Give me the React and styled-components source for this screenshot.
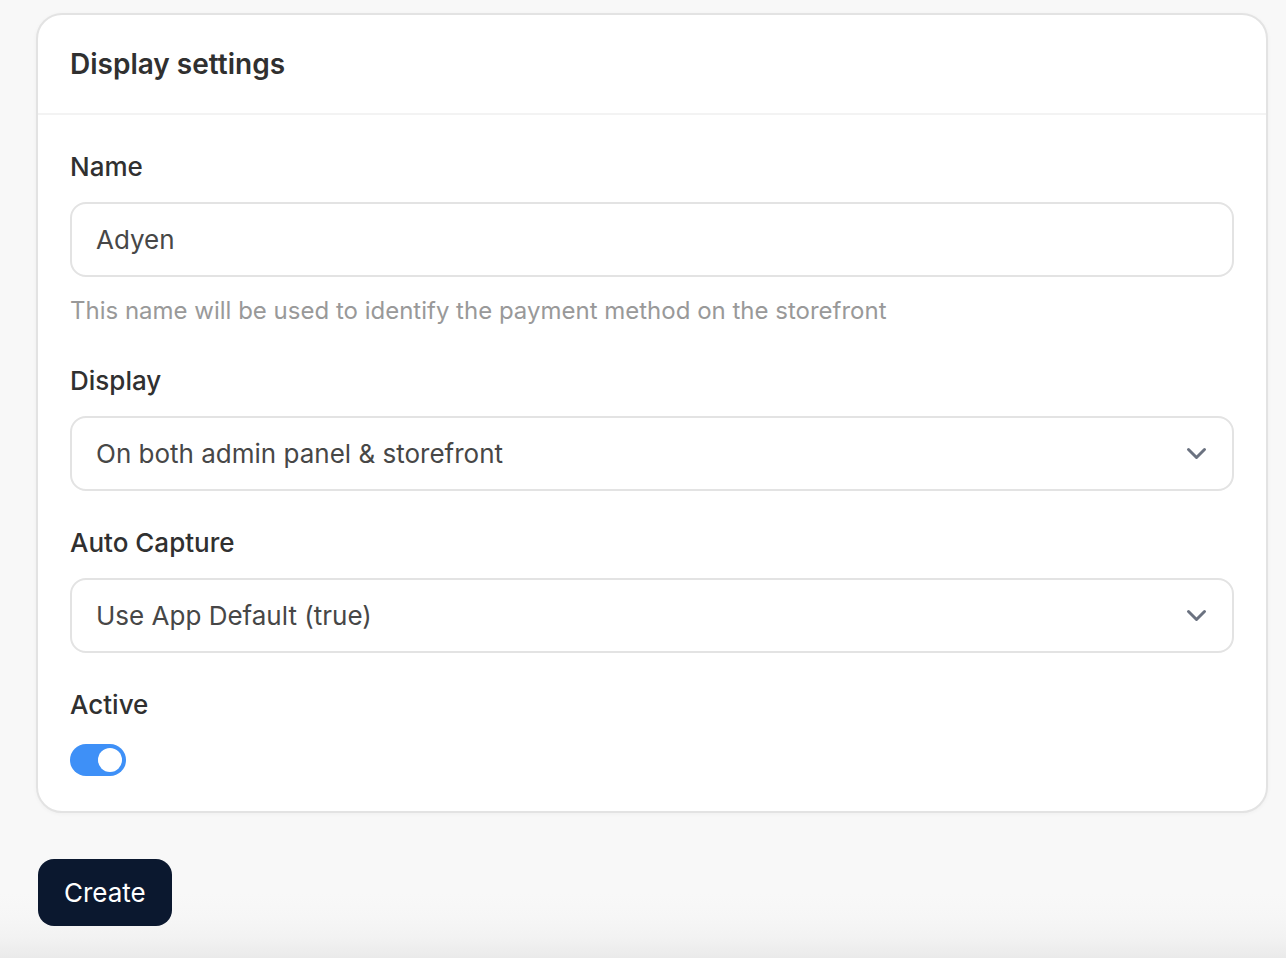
import React from "react";
import styled, { createGlobalStyle } from "styled-components";

const GlobalStyle = createGlobalStyle`
  *, *::before, *::after { box-sizing: border-box; }
  body {
    margin: 0;
    background: #f8f8f8;
    color: #303030;
    font-family: Inter, "Liberation Sans", sans-serif;
    -webkit-font-smoothing: antialiased;
  }
`;

const Page = styled.form`
  min-height: 100vh;
  padding: 13px 18px 32px 36px;
  background: linear-gradient(to top, #eaeaea 0, #f2f2f2 20px, #f6f6f6 40px, #f8f8f8 64px);
`;

const Card = styled.section`
  background: #fff;
  border: 2px solid #e3e3e3;
  border-radius: 26px;
  box-shadow: 0 1px 4px rgba(0, 0, 0, 0.04);
`;

const CardHeader = styled.header`
  padding: 32px;
  border-bottom: 2px solid #f3f3f3;
`;

const Title = styled.h2`
  margin: 0;
  font-size: 28px;
  font-weight: 600;
  line-height: 34px;
`;

const Fields = styled.div`
  display: flex;
  flex-direction: column;
  gap: 32px;
  padding: 32px;
`;

const Field = styled.div`
  display: flex;
  flex-direction: column;
  align-items: flex-start;
`;

const Label = styled.label`
  margin-bottom: 15px;
  font-size: 26px;
  font-weight: 500;
  line-height: 40px;
`;

const control = `
  display: block;
  width: 100%;
  height: 75px;
  margin: 0;
  padding: 0 24px;
  color: #474747;
  background: #fff;
  border: 2px solid #e3e3e3;
  border-radius: 16px;
  font: 400 26px/40px Inter, "Liberation Sans", sans-serif;
`;

const TextInput = styled.input`${control}`;

const Select = styled.select`
  ${control}
  appearance: none;
`;

const SelectBox = styled.div`
  position: relative;
  width: 100%;
`;

const Chevron = styled.svg`
  position: absolute;
  top: 24px;
  right: 24px;
  pointer-events: none;
`;

const Hint = styled.p`
  margin: 16px 0 0;
  color: #999;
  font-size: 24px;
  line-height: 36px;
`;

const Switch = styled.input`
  appearance: none;
  width: 56px;
  height: 32px;
  margin: 4px 0 3px;
  padding: 4px;
  border-radius: 16px;
  background: #ccc;

  &::before {
    content: "";
    display: block;
    width: 24px;
    height: 24px;
    border-radius: 50%;
    background: #fff;
  }
  &:checked { background: #3e90f7; }
  &:checked::before { margin-left: 24px; }
`;

const Button = styled.button`
  display: block;
  height: 67px;
  margin: 46px 0 0 2px;
  padding: 0 26px;
  border: 0;
  border-radius: 16px;
  background: #0b182f;
  color: #fff;
  font: 400 26px/40px Inter, "Liberation Sans", sans-serif;
`;

function SelectField({ id, label, options }) {
  return (
    <Field>
      <Label htmlFor={id}>{label}</Label>
      <SelectBox>
        <Select id={id}>
          {options.map((option) => <option key={option}>{option}</option>)}
        </Select>
        <Chevron width="26" height="26" viewBox="0 0 26 26" fill="none" stroke="#6b7280" strokeWidth="3" strokeLinecap="round" strokeLinejoin="round" aria-hidden="true">
          <path d="M4.5 9.5 12.5 17.5 20.5 9.5" />
        </Chevron>
      </SelectBox>
    </Field>
  );
}

export default function App() {
  return (
    <>
      <GlobalStyle />
      <Page onSubmit={(event) => event.preventDefault()}>
        <Card>
          <CardHeader><Title>Display settings</Title></CardHeader>
          <Fields>
            <Field>
              <Label htmlFor="name">Name</Label>
              <TextInput id="name" type="text" defaultValue="Adyen" aria-describedby="name-hint" />
              <Hint id="name-hint">This name will be used to identify the payment method on the storefront</Hint>
            </Field>
            <SelectField id="display" label="Display" options={["On both admin panel & storefront"]} />
            <SelectField id="auto-capture" label="Auto Capture" options={["Use App Default (true)"]} />
            <Field>
              <Label htmlFor="active">Active</Label>
              <Switch id="active" type="checkbox" role="switch" defaultChecked />
            </Field>
          </Fields>
        </Card>
        <Button type="submit">Create</Button>
      </Page>
    </>
  );
}
